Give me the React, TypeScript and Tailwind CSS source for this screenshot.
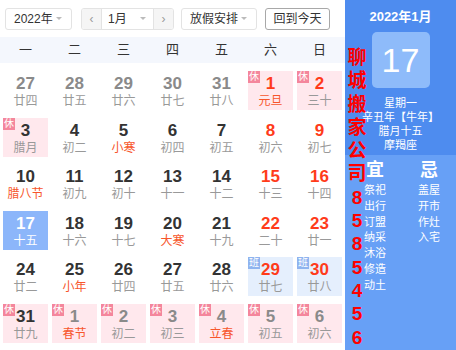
import React from "react";

type Cell = {
  d: number;
  l: string;
  month?: "prev" | "cur" | "next";
  fest?: boolean;
  badge?: "休" | "班";
  today?: boolean;
};

const font = { fontFamily: '"Liberation Sans", "Noto Sans CJK SC", sans-serif' };

const rows: Cell[][] = [
  [
    { d: 27, l: "廿四", month: "prev" },
    { d: 28, l: "廿五", month: "prev" },
    { d: 29, l: "廿六", month: "prev" },
    { d: 30, l: "廿七", month: "prev" },
    { d: 31, l: "廿八", month: "prev" },
    { d: 1, l: "元旦", fest: true, badge: "休" },
    { d: 2, l: "三十", badge: "休" },
  ],
  [
    { d: 3, l: "腊月", badge: "休" },
    { d: 4, l: "初二" },
    { d: 5, l: "小寒", fest: true },
    { d: 6, l: "初四" },
    { d: 7, l: "初五" },
    { d: 8, l: "初六" },
    { d: 9, l: "初七" },
  ],
  [
    { d: 10, l: "腊八节", fest: true },
    { d: 11, l: "初九" },
    { d: 12, l: "初十" },
    { d: 13, l: "十一" },
    { d: 14, l: "十二" },
    { d: 15, l: "十三" },
    { d: 16, l: "十四" },
  ],
  [
    { d: 17, l: "十五", today: true },
    { d: 18, l: "十六" },
    { d: 19, l: "十七" },
    { d: 20, l: "大寒", fest: true },
    { d: 21, l: "十九" },
    { d: 22, l: "二十" },
    { d: 23, l: "廿一" },
  ],
  [
    { d: 24, l: "廿二" },
    { d: 25, l: "小年", fest: true },
    { d: 26, l: "廿四" },
    { d: 27, l: "廿五" },
    { d: 28, l: "廿六" },
    { d: 29, l: "廿七", badge: "班" },
    { d: 30, l: "廿八", badge: "班" },
  ],
  [
    { d: 31, l: "廿九", badge: "休" },
    { d: 1, l: "春节", month: "next", fest: true, badge: "休" },
    { d: 2, l: "初二", month: "next", badge: "休" },
    { d: 3, l: "初三", month: "next", badge: "休" },
    { d: 4, l: "立春", month: "next", fest: true, badge: "休" },
    { d: 5, l: "初五", month: "next", badge: "休" },
    { d: 6, l: "初六", month: "next", badge: "休" },
  ],
];

const weekdays = ["一", "二", "三", "四", "五", "六", "日"];
const yi = ["祭祀", "出行", "订盟", "纳采", "沐浴", "修造", "动土"];
const ji = ["盖屋", "开市", "作灶", "入宅"];
const watermark = "聊城搬家公司8585456".split("");

function Caret() {
  return (
    <svg width="8" height="5" viewBox="0 0 8 5" className="ml-auto">
      <polygon points="1,1 7,1 4,4" fill="#bbbbbb" />
    </svg>
  );
}

function DayCell({ c, col }: { c: Cell; col: number }) {
  const weekend = col >= 5;
  const outside = c.month === "prev" || c.month === "next";

  let bg = "";
  if (c.today) bg = "bg-[#8cb6fa]";
  else if (c.badge === "休") bg = "bg-[#ffe8ed]";
  else if (c.badge === "班") bg = "bg-[#e5effd]";

  let numColor = "text-[#333333]";
  if (c.today) numColor = "text-white";
  else if (outside) numColor = "text-[#8a8a8a]";
  else if (weekend) numColor = "text-[#ff3b1a]";

  let lunarColor = "text-[#999999]";
  if (c.today) lunarColor = "text-white";
  else if (c.fest) lunarColor = "text-[#f7562c]";

  return (
    <div className={`relative h-[39px] flex flex-col items-center pt-[3px] ${bg}`}>
      {c.badge && (
        <span
          className={`absolute left-0 top-0 w-[12px] h-[12px] flex items-center justify-center text-[10px] leading-none text-white ${
            c.badge === "休" ? "bg-[#f4869c]" : "bg-[#8fb4ef]"
          }`}
        >
          {c.badge}
        </span>
      )}
      <span className={`text-[17px] leading-[19px] font-bold ${numColor}`}>{c.d}</span>
      <span className={`text-[12px] leading-[16px] ${lunarColor}`}>{c.l}</span>
    </div>
  );
}

export default function App() {
  return (
    <div className="relative w-[456px] h-[350px] flex bg-white overflow-hidden" style={font}>
      {/* calendar */}
      <div className="w-[347px] flex flex-col">
        <div className="h-[37px] flex items-center pl-[5px] text-[12px] text-[#333333]">
          <div className="w-[67px] h-[22px] flex items-center px-[8px] border border-[#e3e3e3] rounded-[3px]">
            2022年
            <Caret />
          </div>
          <div className="ml-[9px] w-[93px] h-[22px] flex border border-[#e3e3e3] rounded-[3px] overflow-hidden">
            <div className="w-[19px] flex items-center justify-center bg-[#f5f5f5] text-[#999999]">‹</div>
            <div className="flex-1 flex items-center px-[6px] border-x border-[#e3e3e3]">
              1月
              <Caret />
            </div>
            <div className="w-[19px] flex items-center justify-center bg-[#f5f5f5] text-[#999999]">›</div>
          </div>
          <div className="ml-[7px] w-[76px] h-[22px] flex items-center px-[8px] border border-[#e3e3e3] rounded-[3px]">
            放假安排
            <Caret />
          </div>
          <div className="ml-[8px] w-[65px] h-[22px] flex items-center justify-center border border-[#a8a8a8] rounded-[3px]">
            回到今天
          </div>
        </div>

        <div className="h-[26px] grid grid-cols-[repeat(7,45px)] gap-x-[4px] px-[3px] items-center bg-[#f4f7fd] text-[13px] text-[#333333]">
          {weekdays.map((w) => (
            <div key={w} className="text-center">
              {w}
            </div>
          ))}
        </div>

        <div className="mt-[8px] grid grid-cols-[repeat(7,45px)] gap-x-[4px] gap-y-[7.6px] px-[3px]">
          {rows.map((r, ri) => r.map((c, ci) => <DayCell key={`${ri}-${ci}`} c={c} col={ci} />))}
        </div>
      </div>

      {/* side panel */}
      <div className="flex-1 flex flex-col text-white">
        <div className="h-[155px] bg-[#4e8cef] flex flex-col items-center">
          <div className="mt-[9px] text-[13px] leading-[16px] font-bold">2022年1月</div>
          <div className="mt-[7px] w-[58px] h-[56px] rounded-[5px] bg-[#8ebbfa] flex items-center justify-center text-[34px] font-light">
            17
          </div>
          <div className="mt-[8px] text-[11px] leading-[14px] text-center">
            <div>星期一</div>
            <div>辛丑年【牛年】</div>
            <div>腊月十五</div>
            <div>摩羯座</div>
          </div>
        </div>
        <div className="flex-1 bg-[#67a0f6] flex pl-[3px]">
          <div className="w-[54px] flex flex-col items-center pt-[3px]">
            <div className="text-[18px] leading-[24px] font-bold">宜</div>
            <div className="mt-[1px] text-[11px] leading-[15.8px] text-center">
              {yi.map((t) => (
                <div key={t}>{t}</div>
              ))}
            </div>
          </div>
          <div className="w-[54px] flex flex-col items-center pt-[3px]">
            <div className="text-[18px] leading-[24px] font-bold">忌</div>
            <div className="mt-[1px] text-[11px] leading-[15.8px] text-center">
              {ji.map((t) => (
                <div key={t}>{t}</div>
              ))}
            </div>
          </div>
        </div>
      </div>

      {/* watermark overlay */}
      <div className="absolute left-[347px] top-[46px] w-[20px] flex flex-col items-center text-[19px] leading-[23.3px] font-bold text-[#ff0000]">
        {watermark.map((ch, i) => (
          <span key={i}>{ch}</span>
        ))}
      </div>
    </div>
  );
}
